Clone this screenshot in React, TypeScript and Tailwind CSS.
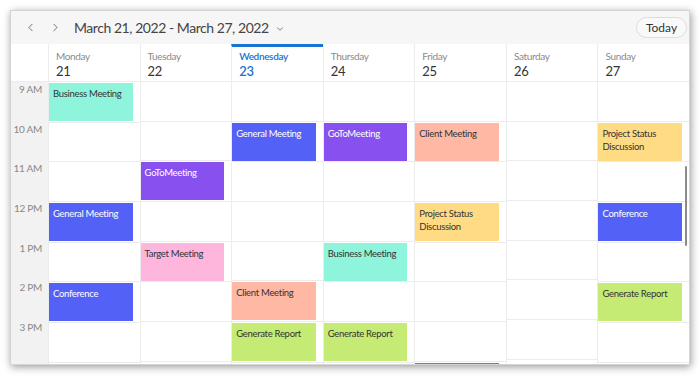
import React from "react";
import { ChevronLeft, ChevronRight, ChevronDown } from "lucide-react";

type Ev = { day: number; hour: number; title: string; color: string; dark?: boolean };

const days = [
  { name: "Monday", date: 21 },
  { name: "Tuesday", date: 22 },
  { name: "Wednesday", date: 23, today: true },
  { name: "Thursday", date: 24 },
  { name: "Friday", date: 25 },
  { name: "Saturday", date: 26 },
  { name: "Sunday", date: 27 },
];

const hours = ["9 AM", "10 AM", "11 AM", "12 PM", "1 PM", "2 PM", "3 PM", "4 PM"];

const mint = "bg-[#8ef5dc]";
const blue = "bg-[#5361f6]";
const purple = "bg-[#8950f0]";
const salmon = "bg-[#feb8a4]";
const yellow = "bg-[#ffdb84]";
const pink = "bg-[#ffb6dd]";
const green = "bg-[#c6eb75]";

const events: Ev[] = [
  { day: 0, hour: 0, title: "Business Meeting", color: mint },
  { day: 0, hour: 3, title: "General Meeting", color: blue, dark: true },
  { day: 0, hour: 5, title: "Conference", color: blue, dark: true },
  { day: 1, hour: 2, title: "GoToMeeting", color: purple, dark: true },
  { day: 1, hour: 4, title: "Target Meeting", color: pink },
  { day: 2, hour: 1, title: "General Meeting", color: blue, dark: true },
  { day: 2, hour: 5, title: "Client Meeting", color: salmon },
  { day: 2, hour: 6, title: "Generate Report", color: green },
  { day: 3, hour: 1, title: "GoToMeeting", color: purple, dark: true },
  { day: 3, hour: 4, title: "Business Meeting", color: mint },
  { day: 3, hour: 6, title: "Generate Report", color: green },
  { day: 4, hour: 1, title: "Client Meeting", color: salmon },
  { day: 4, hour: 3, title: "Project Status\nDiscussion", color: yellow },
  { day: 4, hour: 7, title: "", color: "bg-[#2196f3]", dark: true },
  { day: 6, hour: 1, title: "Project Status\nDiscussion", color: yellow },
  { day: 6, hour: 3, title: "Conference", color: blue, dark: true },
  { day: 6, hour: 5, title: "Generate Report", color: green },
];

function EventBox({ ev }: { ev: Ev }) {
  return (
    <div
      className={`${ev.color} ${
        ev.dark ? "text-white" : "text-[#333]"
      } h-[38px] mt-px mr-[7px] pl-[4px] pt-[4px] text-[9.5px] tracking-[-0.3px] leading-[13px] whitespace-pre overflow-hidden`}
    >
      {ev.title}
    </div>
  );
}

export default function App() {
  return (
    <div
      className="w-[700px] h-[376px] bg-white pl-[10px] pt-[10px] overflow-hidden"
      style={{ fontFamily: 'Lato, "Noto Sans", sans-serif' }}
    >
      <div className="relative w-[680px] h-[355px] bg-white border border-[#d4d4d4] shadow-[1px_2px_8px_rgba(0,0,0,0.4)] flex flex-col overflow-hidden">
        {/* toolbar */}
        <div className="h-[33px] shrink-0 bg-[#f6f6f6] flex items-center pl-[13px] pr-[2px]">
          <ChevronLeft className="w-[13px] h-[13px] text-[#555]" strokeWidth={1.5} />
          <ChevronRight className="w-[13px] h-[13px] text-[#555] ml-[12px]" strokeWidth={1.5} />
          <span className="ml-[12px] text-[14px] tracking-[-0.45px] text-[#444]">
            March 21, 2022 - March 27, 2022
          </span>
          <ChevronDown className="w-[10px] h-[10px] text-[#555] ml-[6px] mt-[2px]" strokeWidth={1.8} />
          <div className="ml-auto h-[21px] w-[51px] rounded-full border border-[#dcdcdc] bg-[#f9f9f9] flex items-center justify-center text-[12px] text-[#333]">
            Today
          </div>
        </div>

        {/* day header */}
        <div className="h-[38px] shrink-0 flex border-b border-[#ececec]">
          <div className="w-[37px] shrink-0" />
          {days.map((d) => (
            <div
              key={d.name}
              className={`flex-1 border-l border-[#ececec] pl-[7px] ${
                d.today ? "border-t-[3px] border-t-[#1a73d0] pt-[3px]" : "pt-[6px]"
              }`}
            >
              <div
                className={`text-[10px] tracking-[-0.35px] leading-[13px] ${
                  d.today ? "text-[#1a73d0] font-semibold" : "text-[#8a8a8a]"
                }`}
              >
                {d.name}
              </div>
              <div
                className={`text-[13px] tracking-[-0.3px] leading-[16px] ${
                  d.today ? "text-[#1a73d0] font-semibold" : "text-[#333]"
                }`}
              >
                {d.date}
              </div>
            </div>
          ))}
        </div>

        {/* grid */}
        <div className="flex flex-1 min-h-0 overflow-hidden">
          <div className="w-[37px] shrink-0 bg-[#f2f2f2]">
            {hours.map((h) => (
              <div key={h} className="h-[39.7px] whitespace-nowrap text-right pr-[6px] pt-[1px] text-[10px] tracking-[-0.3px] leading-[13px] text-[#888]">
                {h}
              </div>
            ))}
          </div>
          {days.map((d, di) => (
            <div key={d.name} className="flex-1 border-l border-[#ececec]">
              {hours.map((h, hi) => {
                const ev = events.find((e) => e.day === di && e.hour === hi);
                return (
                  <div key={h} className="h-[39.7px] border-b border-[#ececec]">
                    {ev && <EventBox ev={ev} />}
                  </div>
                );
              })}
            </div>
          ))}
        </div>

        {/* scrollbar */}
        <div className="absolute right-[2px] top-[155px] w-[2px] h-[80px] rounded-full bg-[#8a8a8a]" />
      </div>
    </div>
  );
}
